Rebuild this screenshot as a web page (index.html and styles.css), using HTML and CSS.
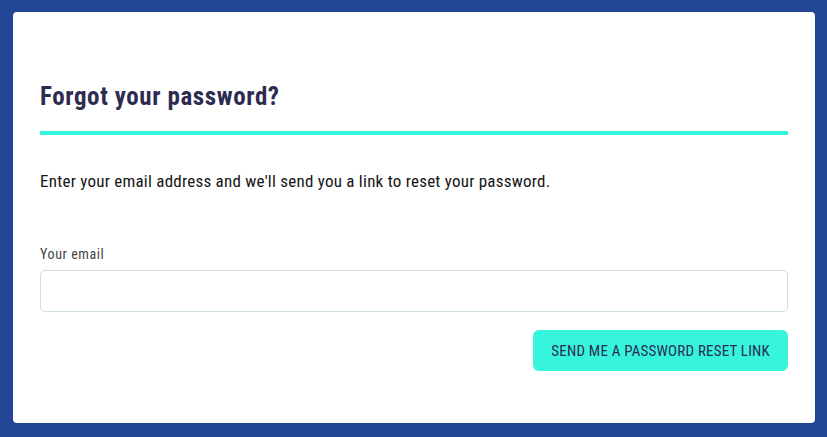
FILE: index.html
```html
<!DOCTYPE html>
<html lang="en">
<head>
    <meta charset="UTF-8">
    <meta name="viewport" content="width=device-width, initial-scale=1.0">
    <title>Forgot your password?</title>
    <link rel="stylesheet" href="styles.css">
</head>
<body>
    <div class="card">
        <h1 class="title">Forgot your password?</h1>
        <p class="intro">Enter your email address and we'll send you a link to reset your password.</p>

        <form class="reset-form">
            <label for="email">Your email</label>
            <input type="email" id="email" name="email">
            <div class="actions">
                <button type="button" class="submit-btn">Send me a password reset link</button>
            </div>
        </form>
    </div>
</body>
</html>
```

FILE: styles.css
```css
body {
    margin: 0;
    padding: 12px 12px 14px 13px;
    background-color: #224596;
    font-family: "Roboto Condensed", Roboto, sans-serif;
}

.card {
    background-color: white;
    border-radius: 4px;
    padding: 70px 27px 52px;
}

.title {
    margin: 0;
    padding-bottom: 19px;
    border-bottom: 4px solid #33f5dc;
    font-size: 25px;
    letter-spacing: 0.6px;
    font-weight: bold;
    color: #2e2b50;
    line-height: 30px;
}

.intro {
    margin: 35px 0 0;
    font-size: 17px;
    letter-spacing: 0.24px;
    line-height: 22px;
    color: #151515;
}

.reset-form {
    margin-top: 54px;
}

label {
    display: block;
    font-size: 14px;
    letter-spacing: 0.6px;
    line-height: 17px;
    color: #444;
    margin-bottom: 7px;
}

input[type="email"] {
    display: block;
    width: 100%;
    box-sizing: border-box;
    height: 42px;
    border: 1px solid #cfdde6;
    border-radius: 5px;
}

.actions {
    display: flex;
    justify-content: flex-end;
    margin-top: 18px;
}

.submit-btn {
    background-color: #36f5dc;
    color: #2b2d52;
    border: none;
    border-radius: 6px;
    height: 41px;
    padding: 0 18px;
    font-family: inherit;
    font-size: 15px;
    letter-spacing: 0.2px;
    text-transform: uppercase;
    cursor: pointer;
}
```
